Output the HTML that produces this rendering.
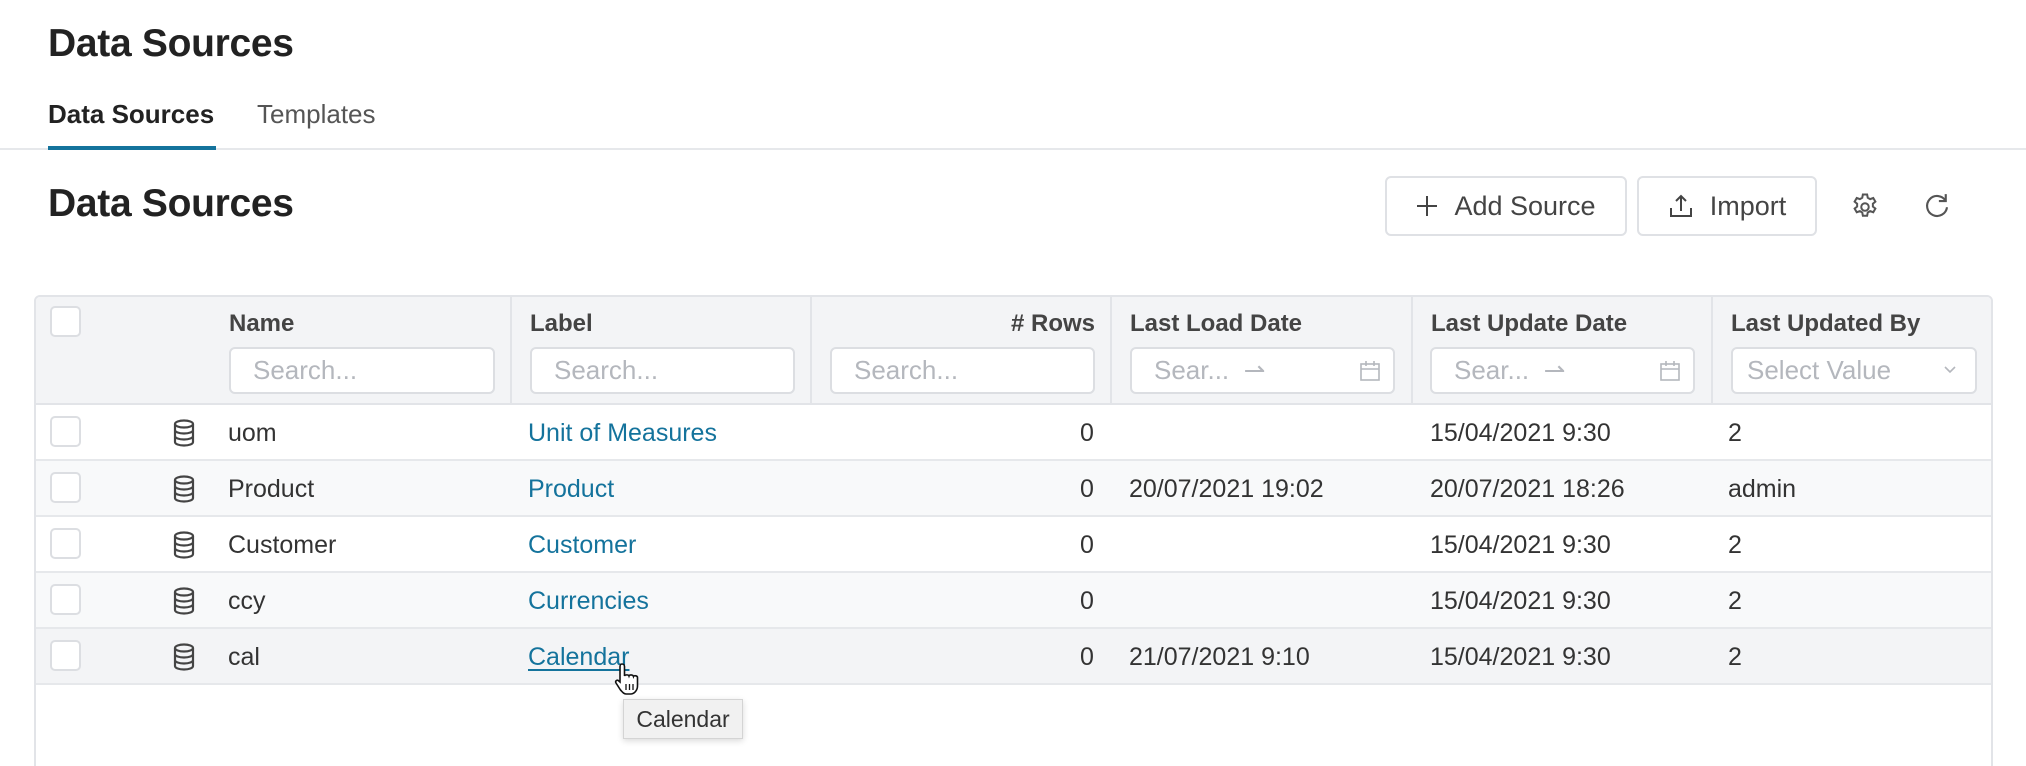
<!DOCTYPE html>
<html style="width:2026px;height:766px;overflow:hidden"><head><meta charset="utf-8">
<style>
*{box-sizing:border-box;margin:0;padding:0}
body{width:2026px;height:766px;overflow:hidden;background:#fff;font-family:"Liberation Sans",sans-serif;color:#333;position:relative}
.abs{position:absolute}
h1{position:absolute;left:48px;font-size:39px;font-weight:700;color:#222;letter-spacing:-0.3px}
.tab{position:absolute;top:99px;font-size:26px}
.btn{position:absolute;top:176px;height:60px;border:2px solid #dfe1e5;border-radius:6px;background:#fff;font-size:27px;color:#444;display:flex;align-items:center;justify-content:center;gap:16px}
.table{position:absolute;left:34px;top:295px;width:1959px;height:480px;border:2px solid #e2e4e8;border-radius:6px;overflow:hidden}
.hdr{position:absolute;left:0;top:0;width:100%;height:108px;background:#f3f4f6;border-bottom:2px solid #e2e4e8}
.vd{position:absolute;top:0;width:2px;height:108px;background:#e2e4e8}
.ht{position:absolute;top:13px;font-size:24px;font-weight:700;color:#444}
.inp{position:absolute;top:50px;height:47px;background:#fff;border:2px solid #dcdee2;border-radius:6px;font-size:26px;color:#b4b7bd;padding-left:22px;line-height:43px;white-space:nowrap}
.cb{position:absolute;width:31px;height:31px;border:2px solid #dcdee2;border-radius:5px;background:#fff}
.row{position:absolute;left:0;width:100%;height:56px;border-bottom:2px solid #e6e8eb;font-size:25px;color:#333}
.row span{position:absolute;top:14px}
.lnk{color:#14739c}
</style></head><body>
<h1 style="top:22px">Data Sources</h1>
<div class="tab" style="left:48px;font-weight:700;color:#222">Data Sources</div>
<div class="tab" style="left:257px;color:#555">Templates</div>
<div class="abs" style="left:0;top:148px;width:2026px;height:2px;background:#e6e8eb"></div>
<div class="abs" style="left:48px;top:146px;width:168px;height:4px;background:#14739c"></div>
<h1 style="top:182px">Data Sources</h1>

<div class="btn" style="left:1385px;width:242px"><svg width="22" height="22" viewBox="0 0 22 22"><path d="M11 1v20M1 11h20" stroke="#444" stroke-width="2"/></svg><span>Add Source</span></div>
<div class="btn" style="left:1637px;width:180px"><svg width="26" height="26" viewBox="0 0 26 26" fill="none" stroke="#444" stroke-width="2"><path d="M13 18V3M8 8l5-5 5 5M3 15v8h20v-8"/></svg><span>Import</span></div>
<svg class="abs" style="left:1850px;top:192px" width="30" height="30" viewBox="0 0 24 24" fill="none" stroke="#555" stroke-width="1.6"><circle cx="12" cy="12" r="3"/><path d="M10.3 2h3.4l.5 2.6 1.9 1.1 2.5-.9 1.7 2.9-2 1.7v2.2l2 1.7-1.7 2.9-2.5-.9-1.9 1.1-.5 2.6h-3.4l-.5-2.6-1.9-1.1-2.5.9-1.7-2.9 2-1.7V9.4l-2-1.7 1.7-2.9 2.5.9 1.9-1.1z"/></svg>
<svg class="abs" style="left:1922px;top:191px" width="30" height="30" viewBox="0 0 24 24" fill="none" stroke="#555" stroke-width="1.7"><path d="M19 8A8 8 0 1 0 20 13"/><path d="M19 2.5V8h-5.5"/></svg>

<div class="table">
 <div class="hdr">
  <div class="cb" style="left:14px;top:9px"></div>
  <div class="vd" style="left:474px"></div><div class="vd" style="left:774px"></div><div class="vd" style="left:1074px"></div><div class="vd" style="left:1375px"></div><div class="vd" style="left:1675px"></div>
  <div class="ht" style="left:193px">Name</div>
  <div class="ht" style="left:494px">Label</div>
  <div class="ht" style="left:900px;width:159px;text-align:right"># Rows</div>
  <div class="ht" style="left:1094px">Last Load Date</div>
  <div class="ht" style="left:1395px">Last Update Date</div>
  <div class="ht" style="left:1695px">Last Updated By</div>
  <div class="inp" style="left:193px;width:266px">Search...</div>
  <div class="inp" style="left:494px;width:265px">Search...</div>
  <div class="inp" style="left:794px;width:265px">Search...</div>
  <div class="inp" style="left:1094px;width:265px">Sear...&nbsp;&nbsp;⇀<svg style="position:absolute;right:12px;top:11px" width="22" height="22" viewBox="0 0 22 22" fill="none" stroke="#b4b7bd" stroke-width="1.6"><rect x="2" y="4" width="18" height="16"/><path d="M2 9h18M7 1v5M15 1v5"/></svg></div>
  <div class="inp" style="left:1394px;width:265px">Sear...&nbsp;&nbsp;⇀<svg style="position:absolute;right:12px;top:11px" width="22" height="22" viewBox="0 0 22 22" fill="none" stroke="#b4b7bd" stroke-width="1.6"><rect x="2" y="4" width="18" height="16"/><path d="M2 9h18M7 1v5M15 1v5"/></svg></div>
  <div class="inp" style="left:1695px;width:246px;padding-left:14px">Select Value<svg style="position:absolute;right:18px;top:16px" width="14" height="10" viewBox="0 0 14 10" fill="none" stroke="#b4b7bd" stroke-width="1.6"><path d="M2 2l5 5 5-5"/></svg></div>
 </div>

 <div class="row" style="top:108px;background:#fff">
  <div class="cb" style="left:14px;top:11px"></div>
  <svg class="abs" style="left:136px;top:14px" width="24" height="28" viewBox="0 0 24 28" fill="none" stroke="#444" stroke-width="2.2"><ellipse cx="12" cy="5" rx="9" ry="3.5"/><path d="M3 5v18c0 2 4 3.5 9 3.5s9-1.5 9-3.5V5M3 11c0 2 4 3.5 9 3.5s9-1.5 9-3.5M3 17c0 2 4 3.5 9 3.5s9-1.5 9-3.5"/></svg>
  <span style="left:192px">uom</span><span class="lnk" style="left:492px">Unit of Measures</span><span style="left:1044px">0</span><span style="left:1394px">15/04/2021 9:30</span><span style="left:1692px">2</span>
 </div>
 <div class="row" style="top:164px;background:#f8f9fa">
  <div class="cb" style="left:14px;top:11px"></div>
  <svg class="abs" style="left:136px;top:14px" width="24" height="28" viewBox="0 0 24 28" fill="none" stroke="#444" stroke-width="2.2"><ellipse cx="12" cy="5" rx="9" ry="3.5"/><path d="M3 5v18c0 2 4 3.5 9 3.5s9-1.5 9-3.5V5M3 11c0 2 4 3.5 9 3.5s9-1.5 9-3.5M3 17c0 2 4 3.5 9 3.5s9-1.5 9-3.5"/></svg>
  <span style="left:192px">Product</span><span class="lnk" style="left:492px">Product</span><span style="left:1044px">0</span><span style="left:1093px">20/07/2021 19:02</span><span style="left:1394px">20/07/2021 18:26</span><span style="left:1692px">admin</span>
 </div>
 <div class="row" style="top:220px;background:#fff">
  <div class="cb" style="left:14px;top:11px"></div>
  <svg class="abs" style="left:136px;top:14px" width="24" height="28" viewBox="0 0 24 28" fill="none" stroke="#444" stroke-width="2.2"><ellipse cx="12" cy="5" rx="9" ry="3.5"/><path d="M3 5v18c0 2 4 3.5 9 3.5s9-1.5 9-3.5V5M3 11c0 2 4 3.5 9 3.5s9-1.5 9-3.5M3 17c0 2 4 3.5 9 3.5s9-1.5 9-3.5"/></svg>
  <span style="left:192px">Customer</span><span class="lnk" style="left:492px">Customer</span><span style="left:1044px">0</span><span style="left:1394px">15/04/2021 9:30</span><span style="left:1692px">2</span>
 </div>
 <div class="row" style="top:276px;background:#f8f9fa">
  <div class="cb" style="left:14px;top:11px"></div>
  <svg class="abs" style="left:136px;top:14px" width="24" height="28" viewBox="0 0 24 28" fill="none" stroke="#444" stroke-width="2.2"><ellipse cx="12" cy="5" rx="9" ry="3.5"/><path d="M3 5v18c0 2 4 3.5 9 3.5s9-1.5 9-3.5V5M3 11c0 2 4 3.5 9 3.5s9-1.5 9-3.5M3 17c0 2 4 3.5 9 3.5s9-1.5 9-3.5"/></svg>
  <span style="left:192px">ccy</span><span class="lnk" style="left:492px">Currencies</span><span style="left:1044px">0</span><span style="left:1394px">15/04/2021 9:30</span><span style="left:1692px">2</span>
 </div>
 <div class="row" style="top:332px;background:#f3f4f6">
  <div class="cb" style="left:14px;top:11px"></div>
  <svg class="abs" style="left:136px;top:14px" width="24" height="28" viewBox="0 0 24 28" fill="none" stroke="#444" stroke-width="2.2"><ellipse cx="12" cy="5" rx="9" ry="3.5"/><path d="M3 5v18c0 2 4 3.5 9 3.5s9-1.5 9-3.5V5M3 11c0 2 4 3.5 9 3.5s9-1.5 9-3.5M3 17c0 2 4 3.5 9 3.5s9-1.5 9-3.5"/></svg>
  <span style="left:192px">cal</span><span class="lnk" style="left:492px;text-decoration:underline;text-underline-offset:4px">Calendar</span><span style="left:1044px">0</span><span style="left:1093px">21/07/2021 9:10</span><span style="left:1394px">15/04/2021 9:30</span><span style="left:1692px">2</span>
 </div>
</div>

<svg class="abs" style="left:614px;top:662px" width="28" height="34" viewBox="0 0 28 34"><path d="M8 2c1.5 0 2.5 1 2.5 2.5V14c.5-1.5 4-1.5 4.5 0 .5-1.5 4-1.5 4.5.5 .5-1.2 4-1 4 1V24c0 4-3 8-7 8h-4c-3 0-4-2-6-4L2 21c-1-1.5.5-3.5 2.3-2.5L6 20V4.5C6 3 7 2 8 2z" fill="#fff" stroke="#111" stroke-width="1.6"/><path d="M12 22v6M15.5 22v6M19 22v6" stroke="#111" stroke-width="1.3"/></svg>
<div class="abs" style="left:623px;top:699px;width:120px;height:40px;background:#f1f1f1;border:1px solid #d4d4d4;box-shadow:0 2px 6px rgba(0,0,0,.15);font-size:23px;color:#333;line-height:38px;text-align:center">Calendar</div>
</body></html>
